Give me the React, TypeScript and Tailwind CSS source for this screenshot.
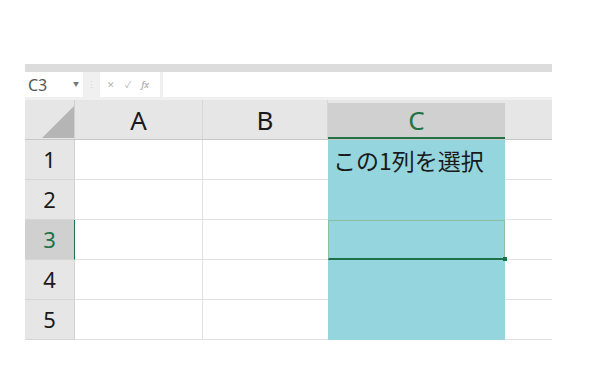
export default function App() {
  const cols = ["A", "B", "C"];
  const rows = [1, 2, 3, 4, 5];
  return (
    <div className="w-[600px] h-[368px] bg-white pt-[64px] pl-[25px]" style={{ fontFamily: '"Noto Sans", "Noto Sans CJK JP", sans-serif' }}>
      <div className="w-[527px]">
        {/* top band */}
        <div className="h-[8px] bg-[#dcdcdc]" />
        {/* formula bar */}
        <div className="h-[28px] bg-[#f0f0f0] flex items-start">
          <div className="w-[58px] h-[25px] bg-white flex items-center pl-[3px] pr-[4px]">
            <span className="text-[16px] text-[#555] leading-none">C3</span>
            <span className="ml-auto text-[6px] text-[#777]">▼</span>
          </div>
          <div className="w-[17px] h-[25px] flex items-center justify-center text-[9px] text-[#d0d0d0]">⋮</div>
          <div className="w-[60px] h-[25px] bg-white flex items-center gap-[10px] pl-[7px] text-[9px] text-[#b4b4b4]">
            <span>✕</span>
            <span>✓</span>
            <span className="italic font-semibold">fx</span>
          </div>
          <div className="ml-[3px] flex-1 h-[25px] bg-white" />
        </div>
        {/* header row */}
        <div className="flex h-[40px] bg-[#e6e6e6] border-b border-[#c8c8c8]">
          <div className="w-[50px] relative border-r border-[#d0d0d0]">
            <svg className="absolute left-0 top-0" width="50" height="40" viewBox="0 0 50 40">
              <polygon points="17,38 49,6 49,38" fill="#b5b5b5" />
            </svg>
          </div>
          {cols.map((c) => (
            <div
              key={c}
              className={
                c === "A"
                  ? "w-[128px] flex items-center justify-center border-r border-[#d6d6d6] text-[26px] text-[#1a1a1a] pt-[2px]"
                  : c === "B"
                  ? "w-[125px] flex items-center justify-center border-r border-[#d6d6d6] text-[26px] text-[#1a1a1a] pt-[2px]"
                  : "w-[177px] mt-[3px] bg-[#d0d0d0] border-b-2 border-[#217346] flex items-center justify-center text-[26px] text-[#217346]"
              }
            >
              {c}
            </div>
          ))}
          <div className="flex-1" />
        </div>
        {/* rows */}
        {rows.map((r) => (
          <div key={r} className="flex h-[40px]">
            <div
              className={
                r === 3
                  ? "w-[50px] bg-[#d0d0d0] border-r border-[#217346] border-b border-b-[#d6d6d6] flex items-center justify-center text-[22px] text-[#217346]"
                  : "w-[50px] bg-[#e6e6e6] border-r border-[#d0d0d0] border-b border-b-[#d6d6d6] flex items-center justify-center text-[22px] text-[#1a1a1a]"
              }
            >
              {r}
            </div>
            <div className="w-[128px] border-r border-b border-[#e2e2e2]" />
            <div className="w-[125px] border-b border-[#e2e2e2]" />
            {r === 3 ? (
              <div className="w-[177px] relative bg-[#95d5de] border border-[#8cbf9f] border-b-2 border-b-[#1e7145]">
                <div className="absolute right-[-3px] bottom-[-3px] w-[4px] h-[4px] bg-[#1e7145]" />
              </div>
            ) : (
              <div className="w-[177px] bg-[#95d5de] pl-[5px] flex items-center">
                {r === 1 && (
                  <span className="text-[23px] text-[#1a1a1a] leading-none" style={{ fontFamily: '"Noto Sans CJK JP", sans-serif' }}>
                    この1列を選択
                  </span>
                )}
              </div>
            )}
            <div className="flex-1 border-b border-[#e2e2e2]" />
          </div>
        ))}
      </div>
    </div>
  );
}
